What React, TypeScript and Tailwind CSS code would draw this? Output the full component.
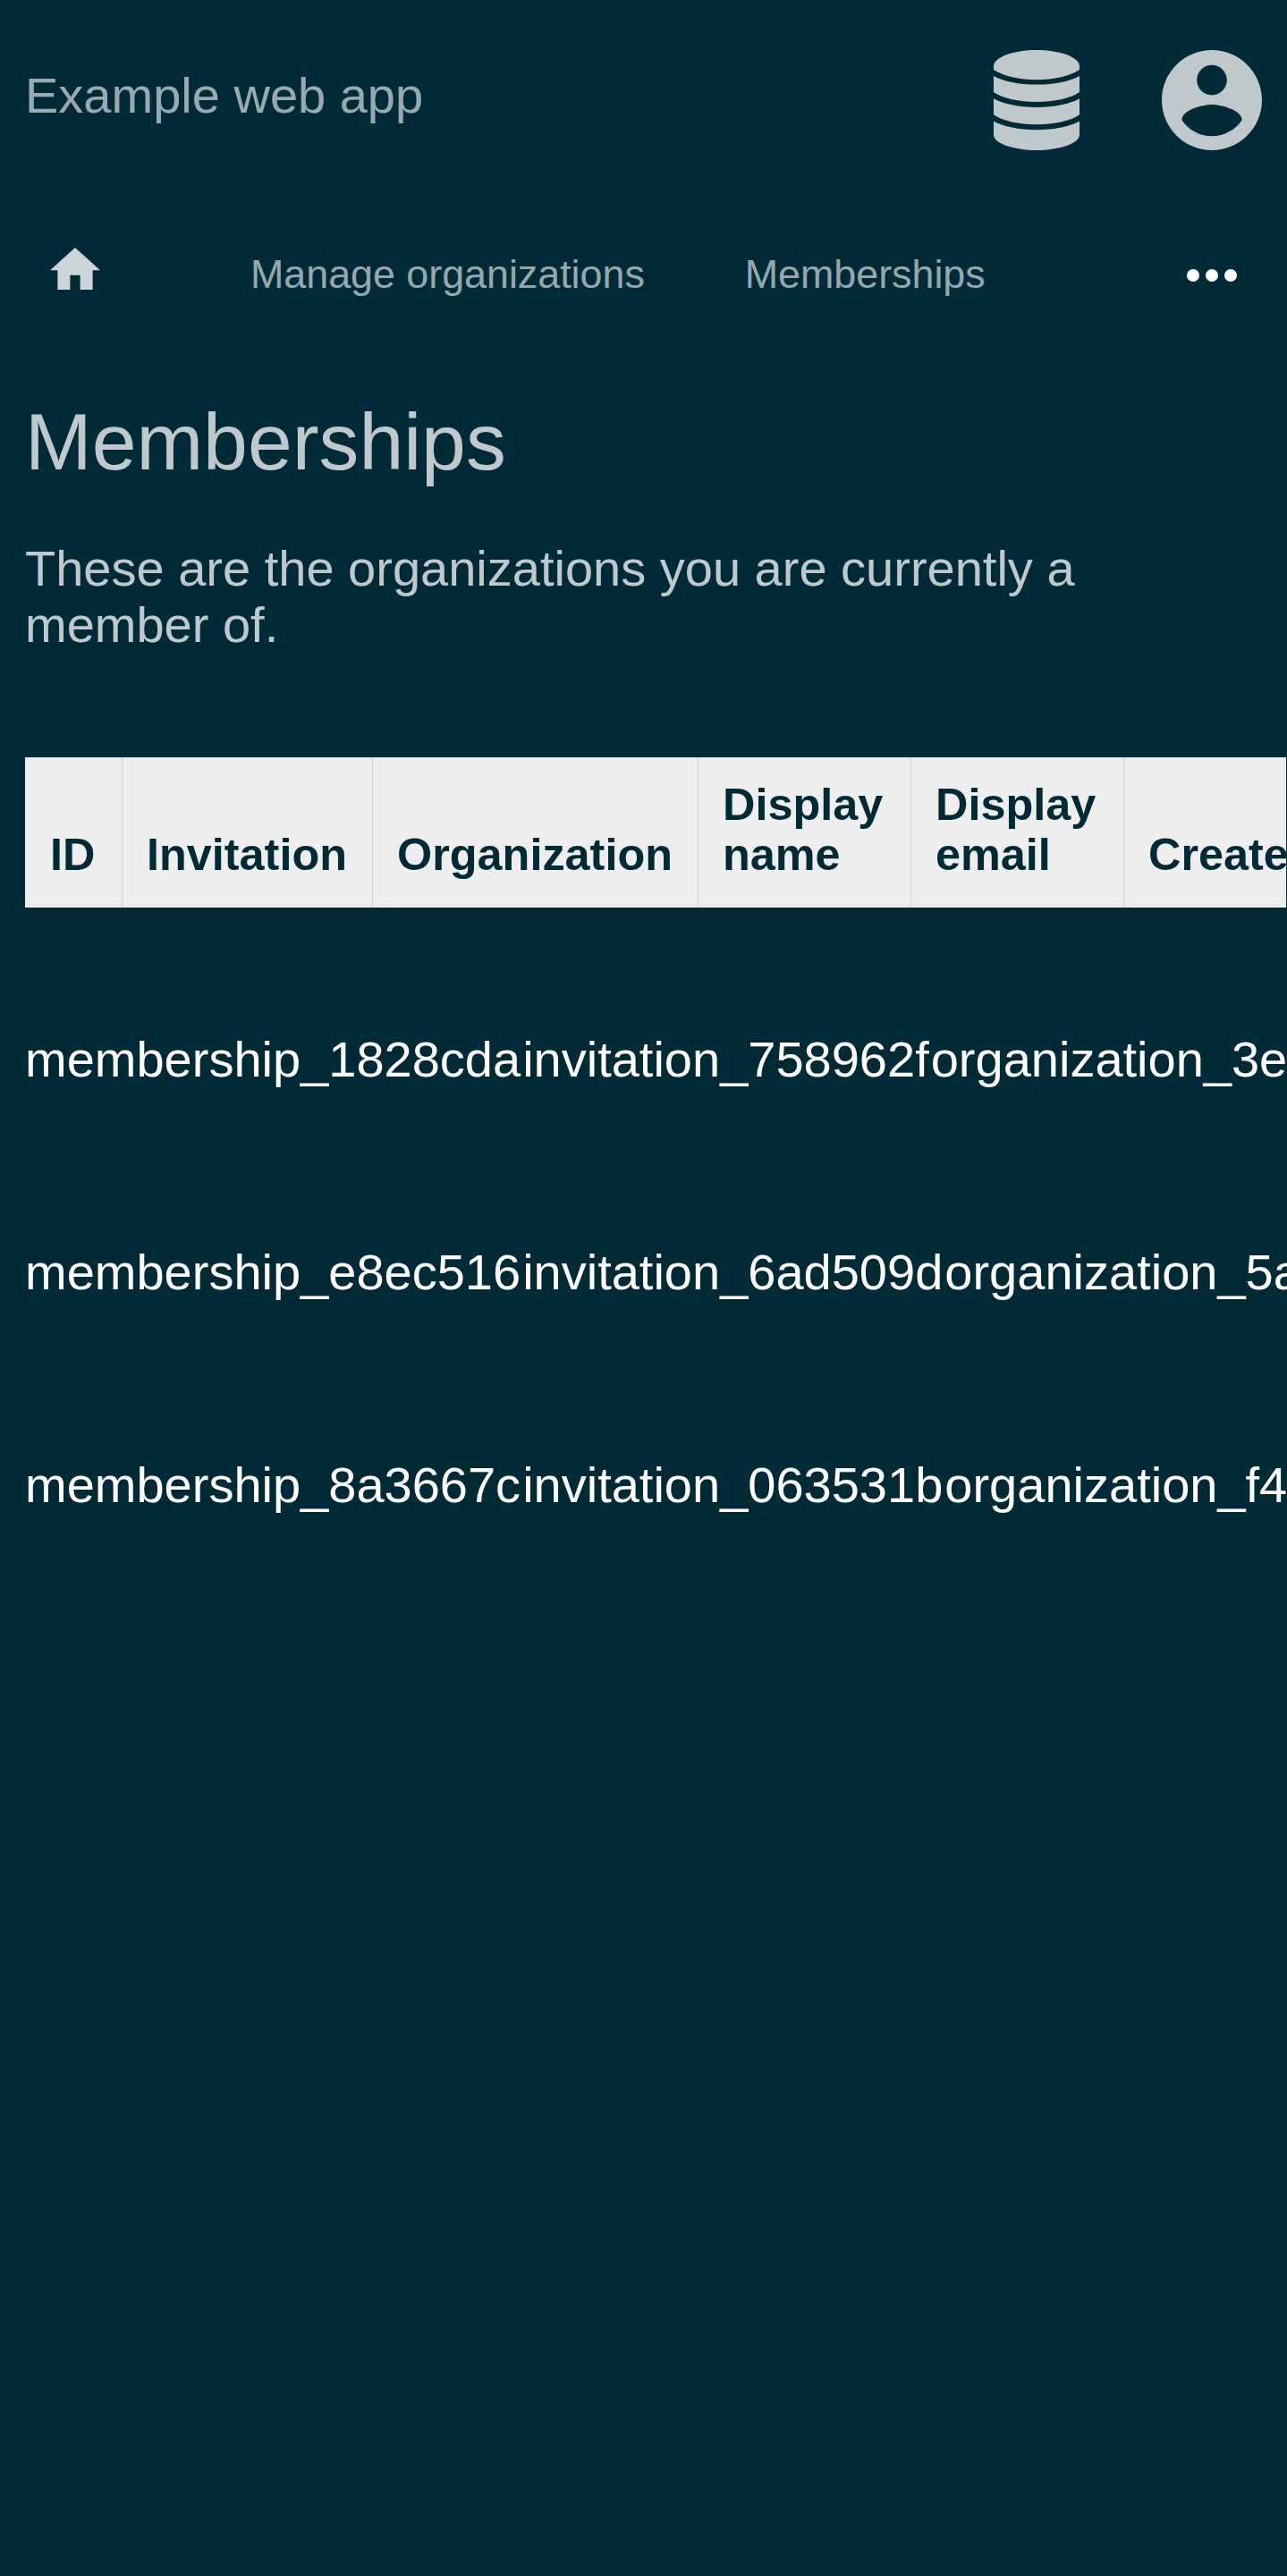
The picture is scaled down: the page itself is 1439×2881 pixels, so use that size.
const columns = [
  { label: 'ID', width: 'w-[109px] pl-7' },
  { label: 'Invitation', width: 'w-[280px] pl-[27px]' },
  { label: 'Organization', width: 'w-[364px] pl-[27px]' },
  { label: 'Display name', width: 'w-[238px] pl-[27px]' },
  { label: 'Display email', width: 'w-[238px] pl-[27px]' },
  { label: 'Created', width: 'w-[250px] pl-[27px]' },
];

const rows = [
  ['membership_1828cda', 'invitation_758962f', 'organization_3e'],
  ['membership_e8ec516', 'invitation_6ad509d', 'organization_5a'],
  ['membership_8a3667c', 'invitation_063531b', 'organization_f4'],
];

function DatabaseIcon() {
  return (
    <svg className="h-28 w-24" viewBox="0 0 97 112" preserveAspectRatio="none" fill="currentColor">
      <path d="M0 18C0 8 22 0 48.500 0S97 8 97 18V22C86 29 68 33.300 48.500 33.300S11 29 0 22Z" />
      <path d="M0 29C11 35 28 38.600 48.500 38.600S86 35 97 29V47C87 54 68 58 48.500 58S10 54 0 47Z" />
      <path d="M0 54.300C11 60.300 28 63.900 48.500 63.900S86 60.300 97 54.300V72.300C87 79.300 68 83.300 48.500 83.300S10 79.300 0 72.300Z" />
      <path d="M0 79.600C11 85.600 28 89.200 48.500 89.200S86 85.600 97 79.600V95C97 104 75 112 48.500 112S0 104 0 95Z" />
    </svg>
  );
}

function AccountIcon() {
  return (
    <svg className="size-28" viewBox="2 2 20 20" fill="currentColor">
      <path d="M12 2C6.480 2 2 6.480 2 12s4.480 10 10 10 10-4.480 10-10S17.520 2 12 2zm0 3c1.660 0 3 1.340 3 3s-1.340 3-3 3-3-1.340-3-3 1.340-3 3-3zm0 14.200c-2.500 0-4.710-1.280-6-3.220.030-1.990 4-3.080 6-3.080 1.990 0 5.970 1.090 6 3.080-1.290 1.940-3.500 3.220-6 3.220z" />
    </svg>
  );
}

function HomeIcon() {
  return (
    <svg className="h-[47.6px] w-14" viewBox="2 3 20 17" fill="currentColor">
      <path d="M10 20v-6h4v6h5v-8h3L12 3 2 12h3v8z" />
    </svg>
  );
}

function MoreIcon() {
  return (
    <svg className="h-3.5 w-14" viewBox="0 0 16 4" fill="currentColor">
      <circle cx="2" cy="2" r="2" />
      <circle cx="8" cy="2" r="2" />
      <circle cx="14" cy="2" r="2" />
    </svg>
  );
}

export default function App() {
  return (
    <div className="h-[2881px] w-[1439px] overflow-hidden bg-[#002b36] font-['Liberation_Sans',sans-serif] text-[56px] leading-[63px] text-white">
      <header className="flex h-56 items-center pr-[28.5px] pl-7 text-white/75">
        <div className="mb-[11px] flex-1 text-white/60">Example web app</div>
        <div className="mr-[92px]">
          <DatabaseIcon />
        </div>
        <AccountIcon />
      </header>
      <nav className="flex h-[168px] items-center pr-14 pl-14 text-[44.8px] leading-[52px] text-white/60">
        <div className="mb-[15px] text-white/80">
          <HomeIcon />
        </div>
        <div className="mb-[5px] ml-[168px]">Manage organizations</div>
        <div className="mb-[5px] ml-28 flex-1">Memberships</div>
        <div className="text-white">
          <MoreIcon />
        </div>
      </nav>
      <main className="pl-7 text-white/75">
        <h1 className="mt-[50px] text-[89.6px] leading-[104px]">Memberships</h1>
        <p className="mt-[58px] w-[1250px]">These are the organizations you are currently a member of.</p>
        <div className="mt-[117px] mr-px flex h-[168px] overflow-hidden bg-[#eee] text-[50.4px] leading-[56px] font-bold text-[#002b36]">
          {columns.map((column) => (
            <div
              key={column.label}
              className={`flex shrink-0 items-end border-r border-[#c9d0d2] pb-[31px] ${column.width}`}
            >
              {column.label}
            </div>
          ))}
        </div>
        <div className="mt-[50px] overflow-hidden text-white">
          {rows.map((row) => (
            <div key={row[0]} className="flex h-[238px] items-center gap-[2px] whitespace-nowrap">
              {row.map((cell) => (
                <span key={cell}>{cell}</span>
              ))}
            </div>
          ))}
        </div>
      </main>
    </div>
  );
}
